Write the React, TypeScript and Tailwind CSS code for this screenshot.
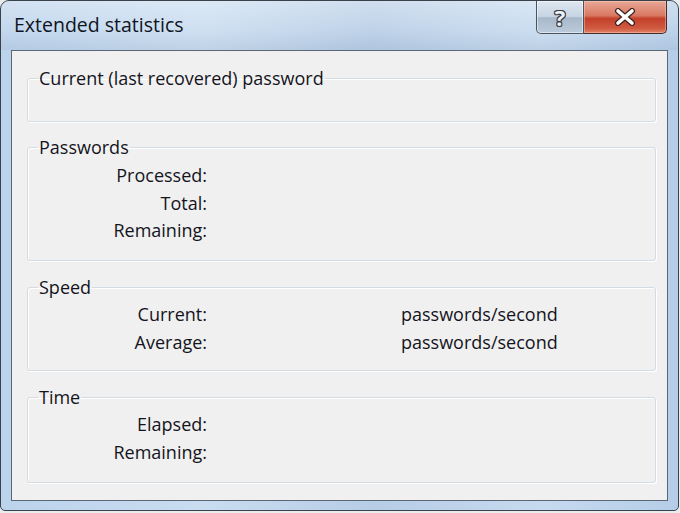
import React from "react";

const font = { fontFamily: '"Open Sans", "Noto Sans", sans-serif' };

function Group({ title, h, children }: { title: string; h: string; children?: React.ReactNode }) {
  return (
    <fieldset
      className={`${h} rounded-[3px] border border-[#d3dce3] shadow-[inset_1px_1px_0_#ffffff,1px_1px_0_#ffffff] px-0 pb-0`}
    >
      <legend className="ml-[10px] px-[1px] text-[18px] leading-[24px] text-[#14141c]">{title}</legend>
      {children}
    </fieldset>
  );
}

function Row({ label, value }: { label: string; value?: string }) {
  return (
    <div className="grid grid-cols-[179px_194px_1fr] h-[27.5px] items-center text-[18px] text-[#14141c]">
      <div className="text-right">{label}</div>
      <div />
      <div>{value ?? ""}</div>
    </div>
  );
}

export default function App() {
  return (
    <div className="w-[680px] h-[513px] bg-[#e9ecef] overflow-hidden" style={font}>
      <div className="w-[679px] h-[511px] rounded-t-[9px] rounded-b-[5px] border border-[#39414b] bg-[linear-gradient(90deg,#bcd3ec_0%,#c9dcf0_30%,#b7cde6_55%,#c6daef_80%,#b5cde8_100%)] flex flex-col">
        {/* title bar */}
        <div className="h-[49px] flex items-start justify-between bg-[linear-gradient(180deg,rgba(255,255,255,0.35)_0%,rgba(255,255,255,0.1)_60%,rgba(120,140,160,0.12)_100%)] rounded-t-[8px]">
          <div className="pl-[13px] pt-[11px] text-[19.5px] leading-[26px] text-[#10141c]">Extended statistics</div>
          <div className="flex mr-[11px]">
            <div className="w-[48px] h-[33px] rounded-bl-[5px] border border-t-0 border-[#4a5460] bg-[linear-gradient(180deg,#dfe7f0_0%,#c6d3e2_50%,#a9b8c9_52%,#bccbdb_100%)] flex items-center justify-center shadow-[inset_0_0_0_1px_rgba(255,255,255,0.5)]">
              <span className="text-[22px] font-bold text-[#eef2f6] leading-none [text-shadow:1px_1px_0_#3a4048,-1px_-1px_0_#3a4048,1px_-1px_0_#3a4048,-1px_1px_0_#3a4048,0_1px_0_#3a4048,0_-1px_0_#3a4048,1px_0_0_#3a4048,-1px_0_0_#3a4048]">?</span>
            </div>
            <div className="w-[83px] h-[33px] rounded-br-[5px] border border-t-0 border-l-0 border-[#4a2a28] bg-[linear-gradient(180deg,#e8a897_0%,#d97963_45%,#c4402b_55%,#cf5a40_85%,#e0836a_100%)] flex items-center justify-center shadow-[inset_0_0_0_1px_rgba(255,220,200,0.4)]">
              <svg width="22" height="18" viewBox="0 0 22 18">
                <path d="M4 3 L18 15 M18 3 L4 15" stroke="#3a2320" strokeWidth="6" strokeLinecap="round" fill="none" />
                <path d="M4 3 L18 15 M18 3 L4 15" stroke="#ffffff" strokeWidth="3.6" strokeLinecap="round" fill="none" />
              </svg>
            </div>
          </div>
        </div>
        {/* client */}
        <div className="mx-[10px] h-[451px] border border-[#5b6775] bg-[#f0f0f0] pl-[15px] pr-[11px] pt-[15px] flex flex-col">
          <Group title="Current (last recovered) password" h="h-[56px]" />
          <div className="mt-[13px]">
            <Group title="Passwords" h="h-[126px]">
              <div className="mt-[3px]">
                <Row label="Processed:" />
                <Row label="Total:" />
                <Row label="Remaining:" />
              </div>
            </Group>
          </div>
          <div className="mt-[14px]">
            <Group title="Speed" h="h-[96px]">
              <div className="mt-[2px]">
                <Row label="Current:" value="passwords/second" />
                <Row label="Average:" value="passwords/second" />
              </div>
            </Group>
          </div>
          <div className="mt-[14px]">
            <Group title="Time" h="h-[98px]">
              <div className="mt-[2px]">
                <Row label="Elapsed:" />
                <Row label="Remaining:" />
              </div>
            </Group>
          </div>
        </div>
      </div>
    </div>
  );
}
